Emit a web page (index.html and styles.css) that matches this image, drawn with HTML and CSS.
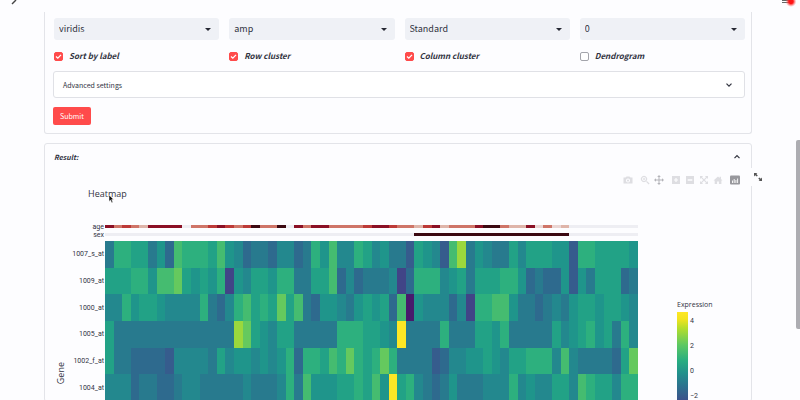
FILE: index.html
```html
<!DOCTYPE html>
<html lang="en">
<head>
<meta charset="utf-8">
<title>Heatmap</title>
<link rel="stylesheet" href="styles.css">
</head>
<body>
<header class="topbar">
  <svg class="topbar-arrow" viewBox="0 0 8 6" aria-hidden="true"><path d="M6 0 L2 4" stroke="#444" stroke-width="1.4" fill="none"/></svg>
  <svg class="topbar-menu" viewBox="0 0 16 10" aria-hidden="true">
    <defs><radialGradient id="halo"><stop offset="0.4" stop-color="#ff1414"/><stop offset="0.65" stop-color="#ff4040" stop-opacity="0.6"/><stop offset="1" stop-color="#ff8080" stop-opacity="0"/></radialGradient></defs>
    <path d="M1 0.5H8M1 2.5H8" stroke="#666" stroke-width="1"/>
    <circle cx="10" cy="1.5" r="5.5" fill="url(#halo)"/>
  </svg>
</header>
<main class="page">
  <form class="card form" onsubmit="return false">
    <div class="fields">
      <div class="select"><select aria-label="Color map"><option>viridis</option></select></div>
      <div class="select"><select aria-label="Label color map"><option>amp</option></select></div>
      <div class="select"><select aria-label="Scaling"><option>Standard</option></select></div>
      <div class="select"><select aria-label="Axis"><option>0</option></select></div>
      <label class="check"><input type="checkbox" checked><svg class="tick" viewBox="0 0 9 9" aria-hidden="true"><path d="M2 4.6 L3.8 6.2 L7 2.9"/></svg>Sort by label</label>
      <label class="check"><input type="checkbox" checked><svg class="tick" viewBox="0 0 9 9" aria-hidden="true"><path d="M2 4.6 L3.8 6.2 L7 2.9"/></svg>Row cluster</label>
      <label class="check"><input type="checkbox" checked><svg class="tick" viewBox="0 0 9 9" aria-hidden="true"><path d="M2 4.6 L3.8 6.2 L7 2.9"/></svg>Column cluster</label>
      <label class="check"><input type="checkbox"><svg class="tick" viewBox="0 0 9 9" aria-hidden="true"><path d="M2 4.6 L3.8 6.2 L7 2.9"/></svg>Dendrogram</label>
    </div>
    <details class="advanced">
      <summary>Advanced settings<svg class="chevron" viewBox="0 0 8 8" aria-hidden="true"><path d="M1.5 2.7 L4 5.2 L6.5 2.7"/></svg></summary>
    </details>
    <button class="submit" type="submit">Submit</button>
  </form>

  <details class="card result" open>
    <summary>Result:<svg class="chevron" viewBox="0 0 8 8" aria-hidden="true"><path d="M1.5 5.2 L4 2.7 L6.5 5.2"/></svg></summary>
    <button class="expand" aria-label="View fullscreen"><svg viewBox="0 0 10 10" aria-hidden="true"><path d="M1 1h3.4L3.3 2.1 4.8 3.6 3.8 4.6 2.2 3.2 1 4.4zM9 9H5.6l1.1-1.1-1.4-1.5 1-1 1.5 1.4L9 5.6z" fill="#555"/></svg></button>
    <div class="toolbar">
      <div class="group">
        <button aria-label="Download plot"><svg viewBox="0 0 10 10"><path fill-rule="evenodd" d="M0.5 2.5h2l1-1h3l1 1h2v6h-9zM5 3.4a2.1 2.1 0 1 0 .01 0zM5 4.6a1 1 0 1 1-.01 0z"/></svg></button>
      </div>
      <div class="group">
        <button aria-label="Zoom"><svg viewBox="0 0 10 10"><path fill-rule="evenodd" d="M4 0.8a3.2 3.2 0 1 0 .01 0zM4 2a2 2 0 1 1-.01 0z"/><path d="M6 6.8l.9-.9L9.6 8.6l-.9.9zM3.6 2.8h.9v.8h.8v.9h-.8v.8h-.9v-.8h-.8v-.9h.8z"/></svg></button>
        <button class="active" aria-label="Pan"><svg viewBox="0 0 10 10"><path d="M5 0l1.8 2H5.5v2.5H8V3.2L10 5 8 6.8V5.5H5.5V8h1.3L5 10 3.2 8h1.3V5.5H2v1.3L0 5l2-1.8v1.3h2.5V2H3.2z"/></svg></button>
      </div>
      <div class="group">
        <button aria-label="Zoom in"><svg viewBox="0 0 10 10"><path fill-rule="evenodd" d="M1 1h8v8H1zM4.4 3v1.4H3v1.2h1.4V7h1.2V5.6H7V4.4H5.6V3z"/></svg></button>
        <button aria-label="Zoom out"><svg viewBox="0 0 10 10"><path fill-rule="evenodd" d="M1 1h8v8H1zM2.7 4.3v1.4h4.6V4.3z"/></svg></button>
        <button aria-label="Autoscale"><svg viewBox="0 0 10 10"><path d="M1 1h2.6v1H2.8L5 4.2 7.2 2h-.8V1H9v2.6H8v-.8L5.8 5 8 7.2v-.8h1V9H6.4V8h.8L5 5.8 2.8 8h.8v1H1V6.4h1v.8L4.2 5 2 2.8v.8H1z"/></svg></button>
        <button aria-label="Reset axes"><svg viewBox="0 0 10 10"><path d="M0.5 5.5L5 1.6l1.6 1.3V1.7H8v2.4l1.5 1.4H8.4V9H5.9V6.4H4.1V9H1.7V5.5z"/></svg></button>
      </div>
      <div class="group">
        <button class="logo" aria-label="Produced with Plotly"><svg viewBox="0 0 10 10"><rect x="0" y="0.5" width="10" height="9" rx="1"/><path d="M2.5 8V5.5M4.2 8V4M5.9 8V5M7.6 8V3.5" stroke="#fff" stroke-width="0.9"/></svg></button>
      </div>
    </div>
    <h2 class="title">Heatmap<svg class="pointer" viewBox="0 0 7 10" aria-hidden="true"><path d="M1 1v6.4l1.5-1.3 1.2 2.7 1.2-.5-1.2-2.7h2z" fill="#111" stroke="#fff" stroke-width="0.5"/></svg></h2>
    <div class="plot">
      <div class="strip-names"><span>age</span><span>sex</span></div>
      <div class="strips">
        <svg id="age" viewBox="0 0 62 1" preserveAspectRatio="none" shape-rendering="crispEdges"></svg>
        <svg id="sex" viewBox="0 0 62 1" preserveAspectRatio="none" shape-rendering="crispEdges"></svg>
      </div>
      <div class="rows">
        <span class="axis">Gene</span>
        <span>1007_s_at</span><span>1009_at</span><span>1000_at</span><span>1005_at</span><span>1002_f_at</span><span>1004_at</span>
      </div>
      <svg id="heat" viewBox="0 0 62 6" preserveAspectRatio="none" shape-rendering="crispEdges"></svg>
      <div class="legend">
        <span class="legend-name">Expression</span>
        <div class="scale">
          <div class="bar"></div>
          <div class="ticks"><span>4</span><span>2</span><span>0</span><span>−2</span></div>
        </div>
      </div>
    </div>
  </details>
</main>
<div class="scrollbar"></div>
<script src="plot.js"></script>
</body>
</html>
```
FILE: styles.css
```css
* { box-sizing: border-box; }
body {
  margin: 0;
  height: 100vh;
  overflow: hidden;
  background: #fdfdff;
  color: #31333f;
  font-family: "Noto Sans CJK JP", "Noto Sans", sans-serif;
  font-size: 9px;
  line-height: 12px;
}
button, select, input { font: inherit; color: inherit; margin: 0; }
button { border: 0; padding: 0; background: none; }
summary { display: flex; align-items: center; justify-content: space-between; list-style: none; }
svg { display: block; }

.topbar { height: 12px; display: flex; justify-content: space-between; padding: 0 3px 0 10px; }
.topbar-arrow { width: 8px; height: 6px; }
.topbar-menu { width: 16px; height: 10px; }

.page { padding: 0 48px 0 44px; }
.card { border: 1px solid #e3e4e9; border-radius: 3px; }
.form { border-top: 0; border-radius: 0 0 3px 3px; padding: 6px 6px 8px 8px; }
.fields { display: grid; grid-template-columns: repeat(4, 1fr); column-gap: 10px; row-gap: 10px; padding-left: 1px; }
.select { position: relative; }
.select::after {
  content: "";
  position: absolute;
  right: 8px;
  top: 10px;
  border: 3px solid transparent;
  border-top-color: #262833;
  border-bottom: 0;
  pointer-events: none;
}
.select select {
  display: block;
  width: 100%;
  height: 22px;
  padding: 0 5px;
  border: 0;
  border-radius: 3px;
  background: #eff1f6;
  appearance: none;
}
.check { position: relative; display: flex; align-items: center; gap: 6px; font-size: 8px; font-weight: bold; font-style: italic; }
.check input {
  appearance: none;
  width: 9px;
  height: 9px;
  border: 1px solid #a3a4ab;
  border-radius: 2px;
  background: #fff;
}
.check input:checked { border-color: #ff4b4b; background: #ff4b4b; }
.tick { position: absolute; left: 0; width: 9px; height: 9px; fill: none; stroke: #fff; stroke-width: 1.3; }
.check input:not(:checked) + .tick { display: none; }

.advanced { margin-top: 9px; border: 1px solid #e0e1e6; border-radius: 3px; background: #fff; }
.advanced summary { height: 25px; padding: 0 11px 0 9px; font-size: 7px; }
.chevron { width: 8px; height: 8px; fill: none; stroke: #31333f; stroke-width: 1.2; }
.submit {
  display: block;
  width: 38px;
  height: 18px;
  margin-top: 9px;
  border-radius: 2px;
  background: #ff4b4b;
  color: #fff;
  font-size: 7px;
}

.result { position: relative; margin-top: 9px; }
.result summary { height: 25px; padding: 0 10px 0 9px; font-size: 7px; font-weight: bold; font-style: italic; }
.expand { position: absolute; right: -16px; top: 24px; width: 20px; height: 18px; padding: 4px 0 4px 6px; background: #fdfdff; }
.expand svg { width: 10px; height: 10px; }
.toolbar { display: flex; justify-content: flex-end; gap: 7px; padding: 6px 11px 0 0; }
.group { display: flex; gap: 4px; }
.toolbar svg { width: 10px; height: 10px; fill: #dedee2; }
.toolbar .active svg { fill: #b4b4b9; }
.toolbar .logo svg { fill: #98989d; }
.title { position: relative; margin: 2px 0 0 43px; font-size: 9px; font-weight: normal; line-height: 14px; font-family: "Open Sans", sans-serif; }
.pointer { position: absolute; left: 20px; top: 7px; width: 7px; height: 10px; }

.plot {
  display: grid;
  grid-template-columns: 60px 1fr 113px;
  grid-template-rows: 16px 160px;
  row-gap: 2px;
  margin-top: 22px;
  font-family: Roboto, sans-serif;
  font-size: 7px;
  line-height: 8px;
}
.strip-names { display: flex; flex-direction: column; text-align: right; padding-right: 1px; }
.strips { display: grid; grid-template-rows: 3px 3px; gap: 5px; padding-top: 2px; }
.strips svg { width: 100%; height: 3px; }
.rows { position: relative; grid-row: 2; display: grid; grid-template-rows: repeat(6, 1fr); align-items: center; text-align: right; padding-right: 1px; }
.axis { position: absolute; left: 10px; top: 121px; writing-mode: vertical-rl; transform: rotate(180deg); font-family: "Open Sans", sans-serif; font-size: 9px; line-height: 12px; }
#heat { grid-row: 2; width: 100%; height: 160px; }
.legend { grid-row: 2; grid-column: 3; padding: 60px 0 0 39px; }
.legend-name { display: block; font-family: "Open Sans", sans-serif; }
.scale { display: flex; gap: 2px; margin-top: 3px; }
.bar { width: 11px; height: 90px; background: linear-gradient(#fde725 0, #f3e31f 7px, #b5de2b 16px, #5cc863 33px, #27ad81 49px, #21918c 61px, #2c728e 74px, #3b528b 88px); }
.ticks { display: flex; flex-direction: column; gap: 17px; padding-top: 5px; }

.scrollbar { position: fixed; right: 0; top: 140px; width: 4px; height: 189px; border-radius: 2px 0 0 2px; background: #adadb2; }
```
FILE: plot.js
```js
const viridis = {
  0: "#481a6c", 1: "#414487", 2: "#365c8d", 3: "#2e6a8e", 4: "#287a8e", 5: "#23888e",
  6: "#1f958b", 7: "#22a286", 8: "#2db07e", 9: "#45bc70", a: "#65c95e", b: "#9bd83d", c: "#fde725"
};
const amp = { A: "#ead6d4", B: "#dfb5aa", C: "#cf7568", D: "#bd3a38", E: "#8b1025", F: "#3c0912", ".": "#eeeef3" };

// One code per sample, in groups of ten.
const genes = [
  "4887746398 8879653443 5534869558 7564427652 9b46544757 776628877776",
  "77788699a7 6768165776 8844779353 4445138885 6747778863 433626477734",
  "5586776555 5843589787 a794366546 7673906555 3518899644 345467767765",
  "7444444444 44444ba765 7744444888 7765c44448 4447768444 447567867485",
  "7443333255 5547566565 68388798a8 78a8444423 5566765778 88595444437a",
  "5553443345 5444445444 5849666778 796c785434 6444555856 557759877588"
].map(row => row.replaceAll(" ", ""));

function draw(id, rows, palette) {
  const svg = document.getElementById(id);
  rows.forEach((row, y) => [...row].forEach((code, x) => {
    const cell = document.createElementNS("http://www.w3.org/2000/svg", "rect");
    cell.setAttribute("x", x);
    cell.setAttribute("y", y);
    cell.setAttribute("width", 1);
    cell.setAttribute("height", 1);
    cell.setAttribute("fill", palette[code]);
    svg.append(cell);
  }));
}

draw("heat", genes, viridis);
draw("age", ["ECDCBEEEE.CCDEDCDFCCF.ECEECCCCDEEDCCBDEBCCCEFFCBBEACABAA".slice(0, 54) + "........"], amp);
draw("sex", [".".repeat(36) + "F".repeat(18) + ".".repeat(8)], amp);
```
